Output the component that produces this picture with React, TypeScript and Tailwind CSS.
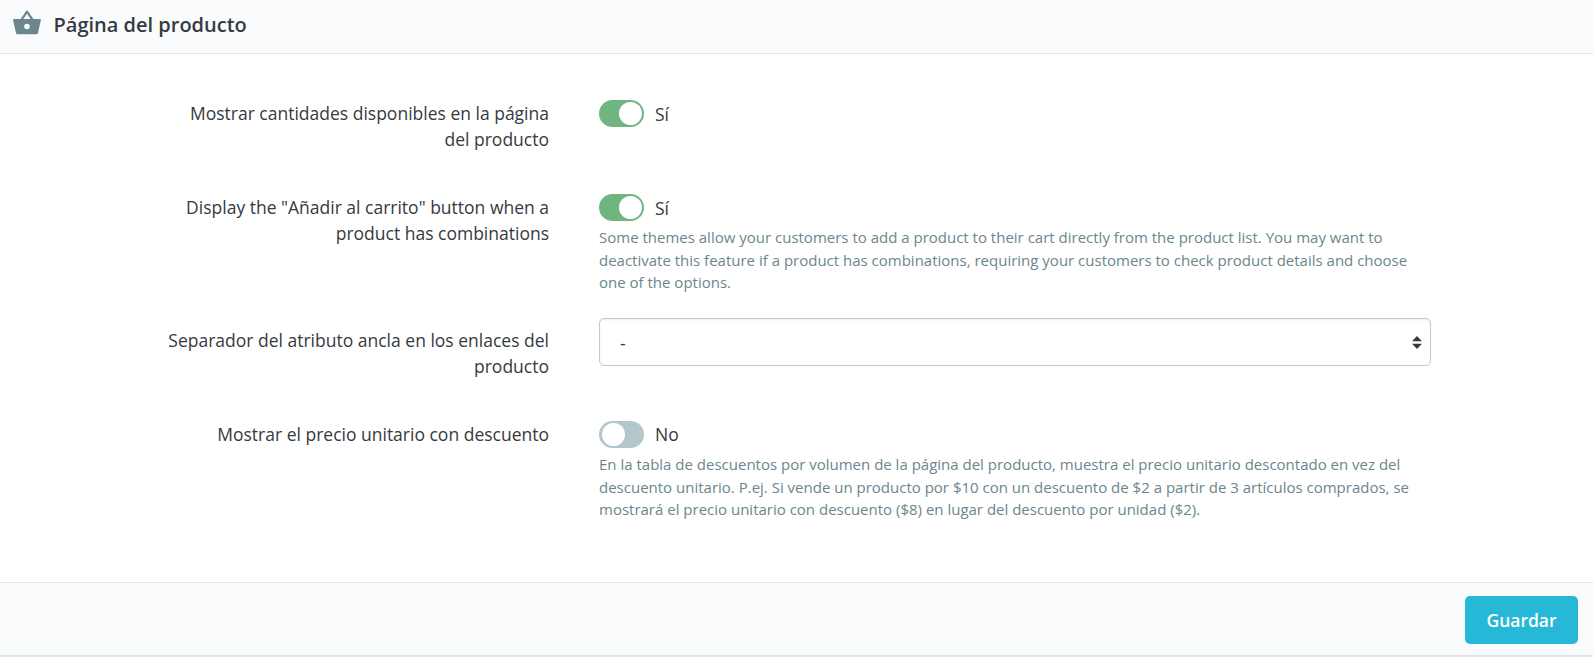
import type { ReactNode } from 'react';

function Toggle({ on }: { on: boolean }) {
  return (
    <div className="flex h-[27px] items-center">
      <span
        role="switch"
        aria-checked={on}
        className={
          on
            ? 'flex h-[27px] w-[45px] items-center justify-end rounded-full bg-[#70b580] pr-[2px]'
            : 'flex h-[27px] w-[45px] items-center justify-start rounded-full bg-[#b3c7cd] pl-[2.5px]'
        }
      >
        <span className="size-[23px] rounded-full bg-white" />
      </span>
      <span
        className={
          on ? 'ml-[11px] pt-px text-[17.5px] leading-[26.25px]' : 'ml-[11px] pb-px text-[17.5px] leading-[26px]'
        }
      >
        {on ? 'Sí' : 'No'}
      </span>
    </div>
  );
}

function Row({ label, className, labelClass = '', children }: { label: string; className: string; labelClass?: string; children: ReactNode }) {
  return (
    <div className={`flex ${className}`}>
      <div className={`w-[549px] shrink-0 pl-[166px] text-right text-[17.5px] leading-[26.25px] ${labelClass}`}>{label}</div>
      <div className="ml-[50px] w-[832px]">{children}</div>
    </div>
  );
}

function Help({ children }: { children: ReactNode }) {
  return <p className="mt-[5px] w-[832px] text-[15px] leading-[22.5px] text-[#6c868e]">{children}</p>;
}

export default function App() {
  return (
    <div className="flex h-[657px] w-[1593px] flex-col overflow-hidden border-b-2 border-[#dfe4e7] bg-white font-['Open_Sans',sans-serif] text-[#363a41]">
      <header className="flex h-[54px] shrink-0 items-center border-b border-[#dbe6e9] bg-[#fafbfc] pb-[4px] pl-[12px]">
        <svg viewBox="0 0 30 30" className="mb-px size-[30px] fill-[#6c868e]">
          <path
            fillRule="evenodd"
            d="M14.3 1.8Q15 1 15.7 1.8L21.4 10H28.2Q29 10.1 28.9 11L26 24Q25.7 25.2 24.6 25.2H5.4Q4.3 25.2 4 24L1.1 11Q1 10.1 1.8 10H8.6ZM15 4.8L11.3 10H18.7ZM15 14.7A2.8 2.8 0 1 0 15 20.3A2.8 2.8 0 1 0 15 14.7Z"
          />
        </svg>
        <h3 className="ml-[11.5px] text-[20px] leading-[30px] font-semibold">Página del producto</h3>
      </header>

      <main className="flex-1 pt-[46px]">
        <Row label="Mostrar cantidades disponibles en la página del producto" className="h-[94px]">
          <Toggle on />
        </Row>
        <Row label={'Display the "Añadir al carrito" button when a product has combinations'} className="h-[124px]">
          <Toggle on />
          <Help>
            Some themes allow your customers to add a product to their cart directly from the product list. You may want to
            deactivate this feature if a product has combinations, requiring your customers to check product details and choose
            one of the options.
          </Help>
        </Row>
        <Row label="Separador del atributo ancla en los enlaces del producto" className="h-[103px]" labelClass="pt-[9px]">
          <div className="flex h-12 items-center justify-between rounded-[5px] border border-[#bbcdd2] bg-white pr-[8px] pl-[20px] text-[17.5px] shadow-[inset_0_1px_2px_rgba(0,0,0,0.075)]">
            <span className="pt-[2px]">-</span>
            <svg viewBox="0 0 10 13" className="h-[13px] w-[10px] fill-[#363a41]">
              <path d="M5 0L10 5.2H0zM5 13L0 7.8H10z" />
            </svg>
          </div>
        </Row>
        <Row label="Mostrar el precio unitario con descuento" className="h-[100px]">
          <Toggle on={false} />
          <Help>
            En la tabla de descuentos por volumen de la página del producto, muestra el precio unitario descontado en vez del
            descuento unitario. P.ej. Si vende un producto por $10 con un descuento de $2 a partir de 3 artículos comprados, se
            mostrará el precio unitario con descuento ($8) en lugar del descuento por unidad ($2).
          </Help>
        </Row>
      </main>

      <footer className="flex h-[73px] shrink-0 items-start justify-end border-t border-[#dbe6e9] bg-[#fafbfc] pt-[13px] pr-[15px]">
        <button className="h-12 w-[113px] rounded-[5px] bg-[#25b9d7] text-[17.5px] font-semibold text-white">Guardar</button>
      </footer>
    </div>
  );
}
